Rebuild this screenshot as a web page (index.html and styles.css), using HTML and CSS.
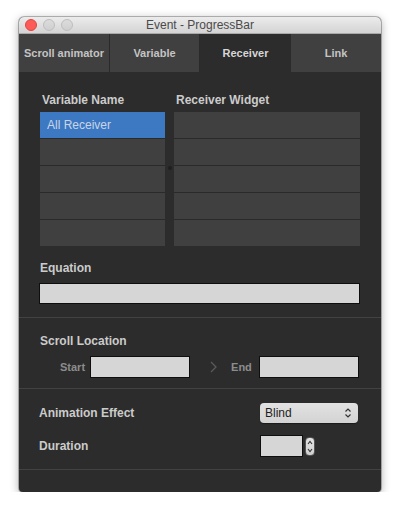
FILE: index.html
```html
<!DOCTYPE html>
<html>
<head>
<meta charset="utf-8">
<link rel="stylesheet" href="styles.css">
</head>
<body>
<div class="window">
  <div class="titlebar">
    <div class="lights">
      <span class="light red"></span>
      <span class="light"></span>
      <span class="light"></span>
    </div>
    <div class="title">Event - ProgressBar</div>
    <div></div>
  </div>
  <div class="tabs">
    <div class="tab">Scroll animator</div>
    <div class="tab">Variable</div>
    <div class="tab active">Receiver</div>
    <div class="tab last">Link</div>
  </div>

  <div class="section s1">
    <div class="lists">
      <div class="col left">
        <div class="colhead">Variable Name</div>
        <div class="list">
          <div class="row sel">All Receiver</div>
          <div class="row"></div>
          <div class="row"></div>
          <div class="row"></div>
          <div class="row"></div>
        </div>
      </div>
      <div class="splitter"><span class="dot"></span></div>
      <div class="col right">
        <div class="colhead">Receiver Widget</div>
        <div class="list">
          <div class="row"></div>
          <div class="row"></div>
          <div class="row"></div>
          <div class="row"></div>
          <div class="row"></div>
        </div>
      </div>
    </div>
    <div class="label eq-label">Equation</div>
    <div class="input eq-input"></div>
  </div>

  <div class="section s2">
    <div class="label">Scroll Location</div>
    <div class="scroll-row">
      <span class="sublabel">Start</span>
      <div class="input short"></div>
      <svg class="chev" width="7" height="12" viewBox="0 0 7 12"><polyline points="1,1 6,6 1,11" fill="none" stroke="#5a5a5a" stroke-width="1.3"/></svg>
      <span class="sublabel end">End</span>
      <div class="input short end-input"></div>
    </div>
  </div>

  <div class="section s3">
    <div class="label">Animation Effect</div>
    <div class="select">
      <span>Blind</span>
      <svg width="8" height="12" viewBox="0 0 8 12"><polyline points="1.5,4.5 4,2 6.5,4.5" fill="none" stroke="#333" stroke-width="1.2"/><polyline points="1.5,7.5 4,10 6.5,7.5" fill="none" stroke="#333" stroke-width="1.2"/></svg>
    </div>
    <div class="label">Duration</div>
    <div class="duration">
      <div class="input dur-input"></div>
      <div class="stepper">
        <svg width="8" height="17" viewBox="0 0 8 17"><polyline points="2,6 4,3.5 6,6" fill="none" stroke="#333" stroke-width="1.1"/><polyline points="2,11 4,13.5 6,11" fill="none" stroke="#333" stroke-width="1.1"/></svg>
      </div>
    </div>
  </div>
  <div class="footer"></div>
</div>
</body>
</html>
```

FILE: styles.css
```css
* { box-sizing: border-box; }
html, body {
  margin: 0;
  padding: 0;
  background: #ffffff;
}
body {
  padding: 17px 0 0 19px;
  font-family: "Liberation Sans", Arial, sans-serif;
}
.window {
  width: 362px;
  height: 475px;
  background: #2c2c2c;
  border-radius: 5px 5px 4px 4px;
  overflow: hidden;
  box-shadow: 0 2px 10px rgba(0,0,0,0.35), 0 0 0 1px rgba(0,0,0,0.25);
  display: flex;
  flex-direction: column;
}
.titlebar {
  height: 17px;
  flex: none;
  background: linear-gradient(#ececec, #d4d4d4);
  display: grid;
  grid-template-columns: 1fr auto 1fr;
  align-items: center;
  border-bottom: 1px solid #a9a9a9;
}
.lights {
  display: flex;
  gap: 6px;
  padding-left: 6px;
}
.light {
  width: 12px;
  height: 12px;
  border-radius: 50%;
  background: linear-gradient(#dcdcdc, #cfcfcf);
  border: 1px solid #bdbdbd;
}
.light.red {
  background: #fc5b57;
  border-color: #e2443f;
}
.title {
  font-size: 12px;
  color: #4a4a4a;
  line-height: 15px;
}
.tabs {
  display: grid;
  grid-template-columns: 91px 90px 91px 1fr;
  height: 38px;
  flex: none;
}
.tab {
  background: #404040;
  color: #c4c4c4;
  font-size: 11px;
  font-weight: bold;
  display: flex;
  align-items: center;
  justify-content: center;
  border-right: 1px solid #2a2a2a;
}
.tab.active {
  background: #2c2c2c;
  color: #d6d6d6;
  border-right: none;
}
.tab.last { border-right: none; }

.section {
  border-bottom: 1px solid #424242;
  flex: none;
}
.label {
  font-size: 12px;
  font-weight: bold;
  color: #cbcbcb;
  line-height: 14px;
}
.s1 {
  height: 246px;
  padding: 21px 21px 0 21px;
  display: flex;
  flex-direction: column;
}
.lists {
  display: flex;
}
.col.left { width: 125px; }
.col.right { flex: 1; }
.splitter {
  width: 9px;
  display: flex;
  justify-content: center;
  padding-top: 73px;
}
.dot {
  width: 4px;
  height: 4px;
  border-radius: 50%;
  background: #1f1f1f;
}
.colhead {
  font-size: 12px;
  font-weight: bold;
  color: #cbcbcb;
  line-height: 14px;
  padding-left: 2px;
  margin-bottom: 5px;
}
.list {
  display: flex;
  flex-direction: column;
  gap: 1px;
  background: #2a2a2a;
}
.row {
  height: 26px;
  background: #404040;
  font-size: 12px;
  color: #c9d5e6;
  line-height: 26px;
  padding-left: 7px;
}
.row.sel {
  background: #3d79c3;
}
.eq-label {
  margin-top: 15px;
}
.input {
  background: #d6d6d6;
  border: 1px solid #0e0e0e;
}
.eq-input {
  margin-top: 8px;
  margin-left: -1px;
  height: 21px;
}
.s2 {
  height: 71px;
  padding: 16px 21px 0 21px;
}
.scroll-row {
  margin-top: 8px;
  display: flex;
  align-items: center;
  padding-left: 20px;
  height: 22px;
}
.sublabel {
  font-size: 11px;
  font-weight: bold;
  color: #8c8c8c;
  margin-right: 5px;
}
.sublabel.end {
  margin-left: 14px;
  margin-right: 7px;
}
.input.short {
  width: 100px;
  height: 22px;
}
.chev {
  margin-left: 20px;
}
.s3 {
  height: 81px;
  padding: 14px 22px 0 20px;
  display: grid;
  grid-template-columns: 221px 1fr;
  grid-template-rows: 20px 22px;
  row-gap: 12px;
  align-items: center;
}
.select {
  width: 98px;
  height: 20px;
  border-radius: 4px;
  background: linear-gradient(#e2e2e2, #d3d3d3);
  box-shadow: 0 1px 1px rgba(0,0,0,0.4);
  display: flex;
  align-items: center;
  justify-content: space-between;
  padding: 0 6px 0 5px;
  font-size: 12px;
  color: #1e1e1e;
}
.duration {
  display: flex;
  align-items: center;
  gap: 2px;
}
.dur-input {
  width: 43px;
  height: 22px;
}
.stepper {
  width: 10px;
  height: 19px;
  border-radius: 4px;
  background: linear-gradient(#e2e2e2, #d0d0d0);
  border: 1px solid #555;
  display: flex;
  align-items: center;
  justify-content: center;
}
.footer {
  flex: 1;
}
```
